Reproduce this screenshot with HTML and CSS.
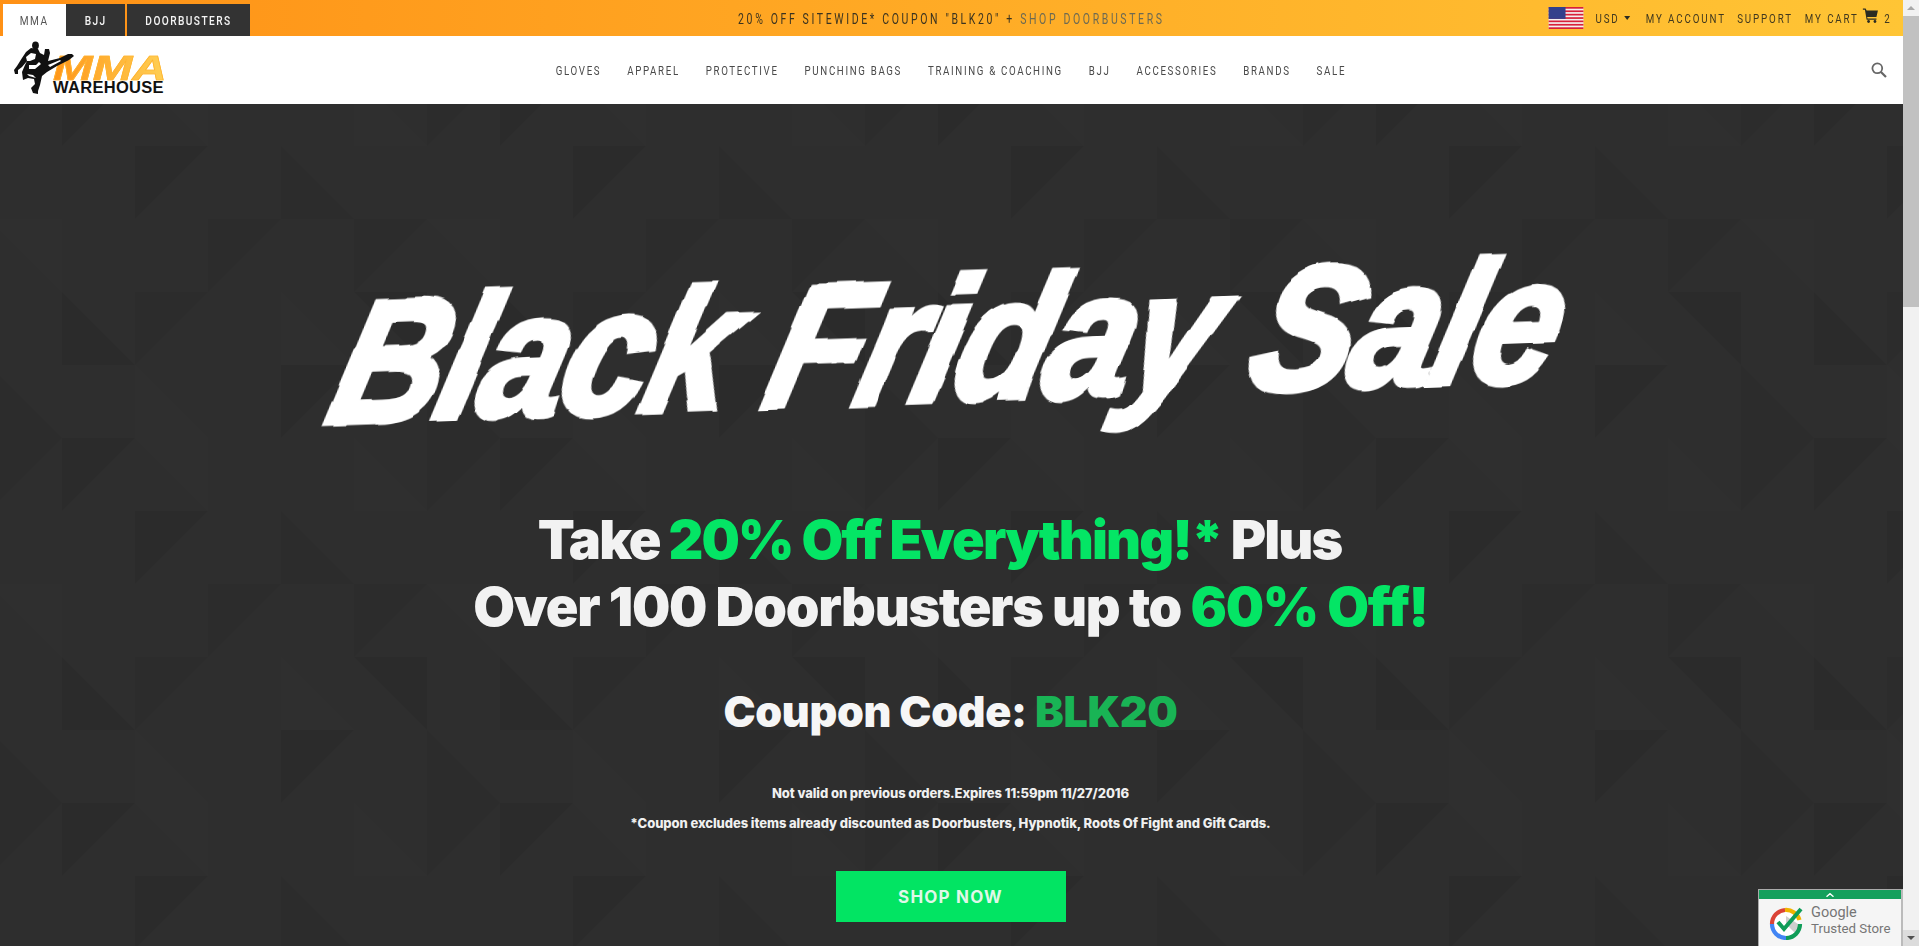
FILE: index.html
```html
<!DOCTYPE html>
<html lang="en">
<head>
<meta charset="utf-8">
<title>MMA Warehouse</title>
<link rel="stylesheet" href="styles.css">
</head>
<body>
<div class="app">
  <div class="page">
    <header class="topbar">
      <nav class="tabs">
        <a class="tab tab-active"><span class="tab-label">MMA</span></a>
        <a class="tab tab-bjj"><span class="tab-label">BJJ</span></a>
        <a class="tab tab-door"><span class="tab-label">DOORBUSTERS</span></a>
      </nav>
      <p class="promo">20% OFF SITEWIDE* COUPON "BLK20" + <span class="promo-link">SHOP DOORBUSTERS</span></p>
      <div class="utils">
        <svg class="flag" viewBox="0 0 35 22" preserveAspectRatio="none" aria-hidden="true">
          <rect width="35" height="22" fill="#f4f0f0"/>
          <g fill="#d8203a">
            <rect y="0" width="35" height="1.7"/><rect y="3.4" width="35" height="1.7"/><rect y="6.8" width="35" height="1.7"/>
            <rect y="10.2" width="35" height="1.7"/><rect y="13.5" width="35" height="1.7"/><rect y="16.9" width="35" height="1.7"/><rect y="20.3" width="35" height="1.7"/>
          </g>
          <rect width="17" height="11.9" fill="#33408c"/>
        </svg>
        <span class="util util-usd">USD</span>
        <span class="caret"></span>
        <span class="util util-account">MY ACCOUNT</span>
        <span class="util util-support">SUPPORT</span>
        <span class="util util-cart">MY CART</span>
        <svg class="cart" viewBox="0 0 16 15" preserveAspectRatio="none" aria-hidden="true">
          <path d="M0 0.5h3l1 2h11.500l-1.500 6.500h-9.500l0.500 1.500h9v1.200h-10L2.300 1.700H0z" fill="#2b2b22"/>
          <circle cx="6" cy="13.500" r="1.400" fill="#2b2b22"/><circle cx="12.500" cy="13.500" r="1.400" fill="#2b2b22"/>
        </svg>
        <span class="util">2</span>
      </div>
    </header>

    <div class="navbar">
      <a class="logo">
        <span class="logo-mma">MMA</span>
        <span class="logo-ware">WAREHOUSE</span>
        <svg class="logo-fighter" viewBox="0 0 60 54" aria-hidden="true">
          <ellipse cx="21.500" cy="4.500" rx="3.400" ry="4" fill="#111"/>
          <path d="M17 7 L24 8 L26 12 L30 14 L31 8 L35 8 L36 12 L34 20 L46 17 L54 13 L58 13 L60 15 L55 19 L43 25 L33 31 L28 35 L26 44 L24 50 L24 53 L19 52 L17 47 L21 43 L20 38 L14 37 L9 39 L8 31 L11 24 L13 20 L8 26 L4 29 L4 33 L1 33 L0 29 L3 25 L8 17 L12 11Z" fill="#111"/>
          <path d="M12 16 L17 12 L22 13 L21 18 L16 20 L13 20Z M15 24 L22 24 L25 21 L27 23 L21 28 L15 28Z M34 24 L46 19 L47 20 L36 26Z M13 33 L19 34 L22 37 L15 35Z" fill="#fff"/>
        </svg>
      </a>
      <nav class="mainnav">
        <a>GLOVES</a><a>APPAREL</a><a>PROTECTIVE</a><a>PUNCHING BAGS</a><a>TRAINING &amp; COACHING</a><a>BJJ</a><a>ACCESSORIES</a><a>BRANDS</a><a>SALE</a>
      </nav>
      <div class="searchwrap">
        <svg class="search" viewBox="0 0 16 16" aria-hidden="true">
          <circle cx="6.300" cy="6.300" r="4.900" fill="none" stroke="#666" stroke-width="1.800"/>
          <path d="M10 10 L15 15" stroke="#666" stroke-width="2.200" fill="none"/>
        </svg>
      </div>
    </div>

    <main class="hero">
      <svg class="hero-pattern" aria-hidden="true">
        <defs>
          <pattern id="tri" width="438" height="365" patternUnits="userSpaceOnUse" x="-11" y="-31">
            <g fill="#2b2b2b">
              <polygon points="73,0 146,0 73,73"/>
              <polygon points="146,73 219,73 146,146"/>
              <polygon points="73,219 146,292 73,292"/>
              <polygon points="365,219 438,219 438,292"/>
              <polygon points="292,292 365,292 292,365"/>
            </g>
            <g fill="#2f2f2f">
              <polygon points="146,0 219,0 219,73"/>
              <polygon points="0,146 73,146 73,219"/>
              <polygon points="365,0 438,73 365,73"/>
              <polygon points="292,219 365,292 292,292"/>
              <polygon points="146,292 219,365 146,365"/>
            </g>
            <g fill="#2c2c2c">
              <polygon points="0,0 73,0 0,73"/>
              <polygon points="219,146 292,146 219,219"/>
              <polygon points="292,73 365,146 292,146"/>
              <polygon points="365,146 438,146 365,219"/>
              <polygon points="146,219 219,219 146,292"/>
              <polygon points="0,292 73,365 0,365"/>
            </g>
          </pattern>
          <filter id="brushy" x="-5%" y="-20%" width="110%" height="140%">
            <feTurbulence type="fractalNoise" baseFrequency="0.02" numOctaves="2" seed="4" result="n"/>
            <feDisplacementMap in="SourceGraphic" in2="n" scale="6"/>
          </filter>
        </defs>
        <rect width="100%" height="100%" fill="url(#tri)"/>
      </svg>
      <div class="hero-content">
        <h1 class="brush">Black Friday Sale</h1>
        <p class="offer offer-first">Take <span class="green">20% Off Everything!*</span> Plus</p>
        <p class="offer offer-second">Over 100 Doorbusters up to <span class="green">60% Off!</span></p>
        <p class="coupon">Coupon Code: <span class="green-dim">BLK20</span></p>
        <p class="fine fine-first">Not valid on previous orders.Expires 11:59pm 11/27/2016</p>
        <p class="fine fine-second">*Coupon excludes items already discounted as Doorbusters, Hypnotik, Roots Of Fight and Gift Cards.</p>
        <a class="shop">SHOP NOW</a>
      </div>
    </main>
  </div>

  <div class="scrollbar">
    <span class="sb-up"></span>
    <span class="sb-thumb"></span>
    <span class="sb-track"></span>
    <span class="sb-down"></span>
  </div>

  <aside class="badge">
    <div class="badge-strip"><svg class="badge-chev" viewBox="0 0 8 4" aria-hidden="true"><path d="M0.500 3.700L4 0.700L7.500 3.700" fill="none" stroke="#fff" stroke-width="1.400"/></svg></div>
    <div class="badge-body">
      <svg class="badge-icon" viewBox="0 0 34 34" aria-hidden="true">
        <circle cx="17" cy="18" r="14" fill="#fff"/>
        <path d="M17 18 L28 29 A15 15 0 0 0 29 18 L17 10Z" fill="#cfcfcf"/>
        <g fill="none" stroke-width="4.200">
          <path d="M3 18 A14 14 0 0 1 16 4" stroke="#db4437"/>
          <path d="M16 4 A14 14 0 0 1 30.500 14" stroke="#f0b400"/>
          <path d="M31 18 A14 14 0 0 1 17 32" stroke="#0f9d58"/>
          <path d="M17 32 A14 14 0 0 1 3 18" stroke="#4285f4"/>
        </g>
        <path d="M9 16 L15 23 L32 3" fill="none" stroke="#0f9d58" stroke-width="4"/>
      </svg>
      <div class="badge-text">
        <span class="badge-google">Google</span>
        <span class="badge-trusted">Trusted Store</span>
      </div>
    </div>
  </aside>
</div>
</body>
</html>
```
FILE: styles.css
```css
* { box-sizing: border-box; }
html, body { margin: 0; height: 100%; overflow: hidden; }
body { font-family: "Roboto", "Liberation Sans", sans-serif; background: #2d2d2d; }
p, h1 { margin: 0; }
a { color: inherit; text-decoration: none; }

.app { display: flex; height: 946px; position: relative; }
.page { flex: 1; min-width: 0; display: flex; flex-direction: column; }

/* top bar */
.topbar {
  height: 36px;
  flex: none;
  display: grid;
  grid-template-columns: 1fr auto 1fr;
  align-items: stretch;
  background: linear-gradient(90deg, #ff9116 0%, #ffc535 100%);
  padding: 0 11px 0 3px;
}
.tabs { display: flex; align-self: end; height: 32px; }
.tab {
  display: flex; align-items: center; justify-content: center;
  background: #333; color: #f4f4f4; font-size: 13.500px; font-weight: 500; letter-spacing: 1.9px;
  padding-bottom: 1px;
}
.tab-label { display: block; transform: scaleX(.75); white-space: nowrap; }
.tab-active { width: 63px; background: #fff; color: #555; font-weight: 400; }
.tab-bjj { width: 59px; margin-right: 2px; }
.tab-door { width: 123px; }
.promo {
  align-self: center; font-size: 14px; letter-spacing: 3.5px; color: #3a3320; padding-top: 1px;
  margin-left: 7px; transform: scaleX(.75); white-space: nowrap;
}
.promo-link { color: #6d6a52; }
.utils {
  display: flex; align-items: center; justify-content: flex-end; font-size: 13px; letter-spacing: 2.5px; color: #40381f;
  transform: scaleX(.75); transform-origin: right center; white-space: nowrap;
}
.flag { width: 47px; height: 22px; margin-right: 16px; flex: none; }
.caret { width: 0; height: 0; border: 4.700px solid transparent; border-top: 4px solid #2b2b22; border-bottom: 0; margin: 0 21px 0 6px; }
.util-account { margin-right: 15px; }
.util-support { margin-right: 16px; }
.cart { width: 21px; height: 15px; margin: -6px 8px 0 5px; flex: none; }

/* nav */
.navbar {
  height: 68px; flex: none; background: #fff;
  display: grid; grid-template-columns: 1fr auto 1fr; align-items: center;
  padding: 0 16px 0 14px;
}
.logo { position: relative; width: 149px; height: 52px; display: flex; flex-direction: column; padding: 14px 0 0 39px; align-self: start; margin-top: 5px; }
.logo-mma {
  display: block; height: 26px; width: 86px; font-family: "Liberation Sans", sans-serif; font-weight: 700; font-style: italic;
  font-size: 35px; line-height: 26px; letter-spacing: 0; white-space: nowrap;
  background: linear-gradient(90deg, #ff9517, #ffd257);
  -webkit-background-clip: text; background-clip: text; color: transparent;
  -webkit-text-stroke: .6px #ffb32f;
  transform: scaleX(1.36); transform-origin: left center;
}
.logo-ware { display: block; font-family: "Liberation Sans", sans-serif; font-weight: 700; font-size: 16.500px; line-height: 12px; color: #111; letter-spacing: .3px; white-space: nowrap; }
.logo-fighter { position: absolute; left: 0; top: 0; width: 60px; height: 54px; }
.mainnav { display: flex; gap: 36px; font-size: 13.500px; letter-spacing: 2.3px; color: #4a4a4a; transform: scaleX(.72); white-space: nowrap; }
.searchwrap { display: flex; justify-content: flex-end; }
.search { width: 16px; height: 16px; }

/* hero */
.hero { flex: 1; position: relative; background: #2e2e2e; overflow: hidden; }
.hero-pattern { position: absolute; inset: 0; width: 100%; height: 100%; }
.hero-content { position: relative; display: flex; flex-direction: column; align-items: center; padding-right: 2px; }
.brush {
  font-family: "Liberation Sans", sans-serif; font-weight: 700; font-style: italic;
  font-size: 154px; line-height: 180px; height: 180px; margin-top: 147px; color: #fff;
  white-space: nowrap; letter-spacing: -3px;
  -webkit-text-stroke: 6px #fff;
  transform: rotate(-2deg) skewX(-16deg) scaleY(1.12);
  filter: url(#brushy);
}
.offer { font-family: "Inter", sans-serif; font-weight: 900; font-size: 54px; line-height: 68px; color: #f2f2f2; white-space: nowrap; }
.offer-first { margin-top: 75px; margin-right: 22px; letter-spacing: -1.9px; line-height: 67px; }
.offer-second { letter-spacing: -1.3px; }
.green { color: #04e565; }
.green-dim { color: #19b455; }
.coupon { font-family: "Inter", sans-serif; font-weight: 900; font-size: 43px; line-height: 52px; color: #f6f6f6; margin-top: 44px; white-space: nowrap; letter-spacing: -.3px; }
.fine { font-family: "Inter", sans-serif; font-weight: 800; font-size: 13px; line-height: 20px; color: #f0f0f0; white-space: nowrap; letter-spacing: -.08px; }
.fine-first { margin-top: 46px; }
.fine-second { margin-top: 10px; }
.shop {
  margin-top: 38px; width: 230px; height: 51px; background: #02e463;
  display: flex; align-items: center; justify-content: center;
  font-family: "Inter", sans-serif; font-weight: 700; font-size: 17px; color: #dff8e8; letter-spacing: 1.2px;
}

/* scrollbar */
.scrollbar { width: 16px; flex: none; background: #f1f1f1; display: flex; flex-direction: column; align-items: center; }
.sb-up, .sb-down { flex: none; height: 16px; display: flex; align-items: center; }
.sb-up::before { content: ""; border: 4px solid transparent; border-bottom: 4px solid #a8a8a8; border-top: 0; }
.sb-down::before { content: ""; border: 4px solid transparent; border-top: 4px solid #505050; border-bottom: 0; }
.sb-thumb { width: 100%; height: 291px; background: #c1c1c1; flex: none; }
.sb-track { flex: 1; }
.sb-down { width: 100%; justify-content: center; background: #dcdcdc; }

/* trusted store badge */
.badge { position: absolute; right: 16px; bottom: 0; width: 145px; height: 57px; background: #f5f5f5; border: 1px solid #aaa; border-bottom: 0; border-right: 2px solid #bbb; display: flex; flex-direction: column; }
.badge-strip { height: 9px; background: #14a05c; display: flex; justify-content: center; align-items: center; flex: none; }
.badge-chev { width: 8px; height: 4px; }
.badge-body { flex: 1; display: flex; align-items: center; padding-left: 10px; gap: 8px; }
.badge-icon { width: 34px; height: 34px; flex: none; }
.badge-text { display: flex; flex-direction: column; font-family: "Roboto", sans-serif; color: #757575; margin-top: -5px; }
.badge-google { font-size: 14.500px; line-height: 17px; }
.badge-trusted { font-size: 13.300px; line-height: 16px; white-space: nowrap; }
```
